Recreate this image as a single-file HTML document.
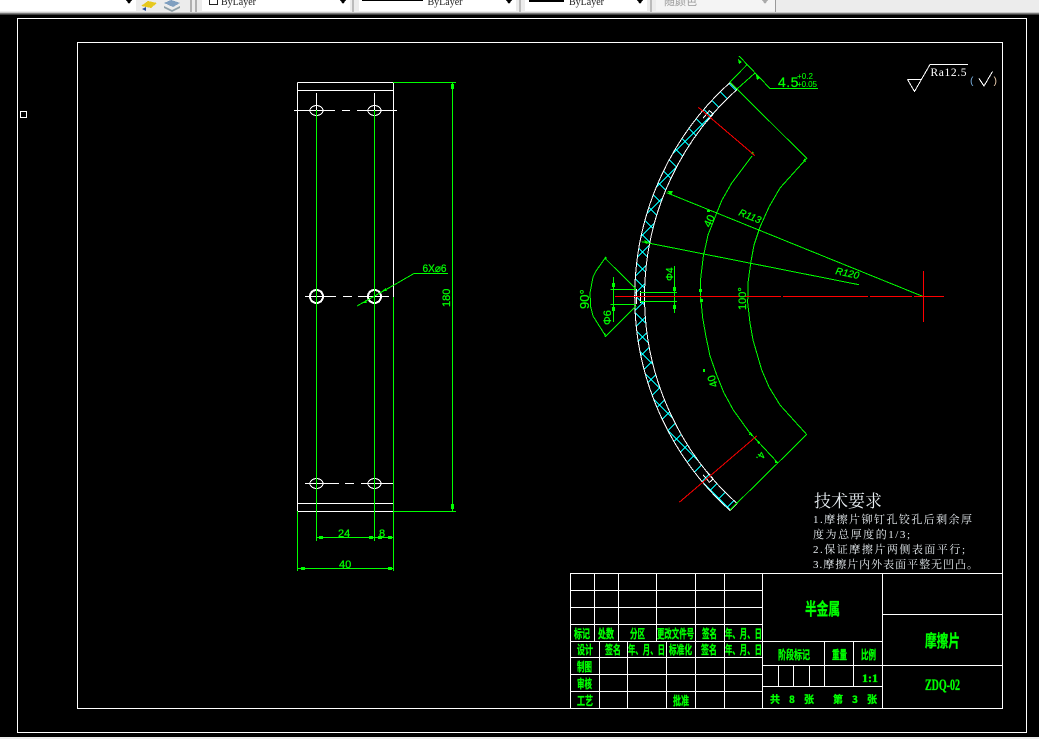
<!DOCTYPE html>
<html><head><meta charset="utf-8"><title>CAD</title>
<style>
html,body{margin:0;padding:0;background:#000;width:1039px;height:739px;overflow:hidden}
svg{display:block;position:absolute;left:0;top:0}
.g{fill:none;stroke:#0f0;stroke-width:1}
.w{fill:none;stroke:#fff;stroke-width:1}
.r{fill:none;stroke:#f00;stroke-width:1}
.t{font-family:"Liberation Sans",sans-serif;fill:#0f0;font-size:11px;stroke:#0f0;stroke-width:.25}
.c{font-family:"WenQuanYi Zen Hei","Noto Sans CJK SC",sans-serif;fill:#0f0;font-size:12px;font-weight:bold;stroke:#0f0;stroke-width:.35}
.k{font-family:"Liberation Serif","WenQuanYi Zen Hei","Noto Serif CJK SC",serif;fill:#e8eef2;font-size:11px}
.b{font-family:"Liberation Serif",serif;font-size:10px;fill:#222}
</style></head><body>
<svg width="1039" height="739" viewBox="0 0 1039 739" xmlns="http://www.w3.org/2000/svg" shape-rendering="crispEdges">
<rect width="1039" height="739" fill="#000"/>
<!-- toolbar -->
<rect x="0" y="0" width="1039" height="15" fill="#ececec"/>
<rect x="0" y="12" width="1039" height="1" fill="#c8c8c8"/>
<rect x="0" y="13" width="1039" height="1" fill="#7a7a7a"/>
<rect x="0" y="14" width="1039" height="1" fill="#404040"/>
<rect x="0" y="0" width="136" height="11" fill="#fff"/>
<path d="M126 0h6l-3 4z" fill="#000"/>
<path d="M141 6l7-5 9 2-6 5z" fill="#e6c81e"/><path d="M142 9l4-2v4z" fill="#2a4fa0"/>
<path d="M164 3l7-3 9 3-7 4z" fill="#7f9fc0"/><path d="M164 6l8 4 8-4v2l-8 4-8-4z" fill="#8fa0a8"/>
<rect x="190" y="0" width="2" height="12" fill="#b0b0b0"/><rect x="195" y="0" width="2" height="12" fill="#b0b0b0"/>
<rect x="202" y="0" width="148" height="11" fill="#fff"/>
<rect x="352" y="0" width="2" height="12" fill="#bbb"/>
<rect x="359" y="0" width="157" height="11" fill="#fff"/>
<rect x="519" y="0" width="2" height="12" fill="#bbb"/>
<rect x="525" y="0" width="122" height="11" fill="#fff"/>
<rect x="650" y="0" width="2" height="12" fill="#bbb"/>
<rect x="656" y="0" width="119" height="11" fill="#f4f4f4"/>
<rect x="775" y="0" width="1" height="12" fill="#999"/>
<rect x="209.500" y="-3.500" width="8" height="8" fill="#fff" stroke="#222"/>
<text x="221" y="5" class="b" shape-rendering="auto">ByLayer</text>
<rect x="362" y="0" width="61" height="1" fill="#000"/>
<text x="427.500" y="5" class="b">ByLayer</text>
<rect x="529" y="0" width="35" height="2" fill="#000"/>
<text x="569" y="5" class="b">ByLayer</text>
<text x="664" y="5" font-family="WenQuanYi Zen Hei,Noto Sans CJK SC,sans-serif" font-size="11" fill="#999">随颜色</text>
<path d="M340 0h6l-3 4zM506 0h6l-3 4zM637 0h6l-3 4z" fill="#000"/><path d="M762 0h6l-3 4z" fill="#aaa"/>
<!-- frames -->
<rect x="17.500" y="18.500" width="1009" height="714" class="w"/>
<rect x="77.500" y="42.500" width="925" height="666" class="w"/>
<rect x="20.500" y="111.500" width="6" height="6" class="w"/>
<!-- left view -->
<g class="w">
<path d="M297.500 82.500V511.500H393.500M297.500 82.500H393.500V297M297.500 90.500H393.500M297.500 503.500H393.500"/>
<path d="M294 110.500H335M342 110.500H350M357 110.500H397M316.500 93V110M374.500 93V110"/>
<path d="M305 296.500H336M343 296.500H352M358 296.500H389"/>
<path d="M305 483.500H339M345 483.500H354M361 483.500H393"/>
<ellipse cx="316.500" cy="110.500" rx="6.500" ry="5"/><ellipse cx="374.500" cy="110.500" rx="6.500" ry="5"/>
<ellipse cx="316.500" cy="483.500" rx="6.500" ry="5"/><ellipse cx="374.500" cy="483.500" rx="6.500" ry="5"/>
<circle cx="316.500" cy="296.500" r="7"/><circle cx="316.500" cy="296.500" r="6"/>
<circle cx="374.500" cy="296.500" r="7"/><circle cx="374.500" cy="296.500" r="6"/>
</g>
<g class="g">
<path d="M316.500 110V541M374.500 110V541M393.500 297V571M297.500 511V571M393 82.500H456M393 511.500H456M452.500 82V511"/>
<path d="M316 537.500H393M297 568.500H393"/>
<path d="M357 306L394 285L414 273.500H448"/>
</g>
<path d="M451 84h3v5h-3zM451 504h3v5h-3zM319 536h4v3h-4zM369 536h4v3h-4zM378 536h4v3h-4zM388 536h4v3h-4zM301 567h4v3h-4zM388 567h4v3h-4z" fill="#0f0"/>
<path d="M382 291l4-3 1 3zM362 303l4-3 1 3z" fill="#0f0"/>
<g shape-rendering="auto">
<text x="338" y="537" class="t">24</text><text x="379" y="537" class="t">8</text><text x="339" y="568" class="t">40</text>
<text x="422.500" y="272" class="t" textLength="24" lengthAdjust="spacingAndGlyphs">6X⌀6</text>
<text transform="translate(450,307) rotate(-90)" class="t">180</text>
</g>
<!-- arc part -->
<defs><clipPath id="band"><path d="M730 82.500A288 288 0 0 0 730 510.500L737 503.500A278 278 0 0 1 737 89.500Z"/></clipPath></defs>
<g clip-path="url(#band)">
<path fill="none" stroke="#0ff" d="M630 409.500l120 120M630 392.500l120 120M630 375.500l120 120M630 358.500l120 120M630 341.500l120 120M630 324.500l120 120M630 307.500l120 120M630 290.500l120 120M630 273.500l120 120M630 256.500l120 120M630 239.500l120 120M630 222.500l120 120M630 205.500l120 120M630 188.500l120 120M630 171.500l120 120M630 154.500l120 120M630 137.500l120 120M630 120.500l120 120M630 103.500l120 120M630 86.500l120 120M630 69.500l120 120M630 52.500l120 120M630 35.500l120 120M630 18.500l120 120M630 1.500l120 120M630 -15.500l120 120"/>
<path fill="none" stroke="#0ff" d="M630 179.500l120 -120M630 196.500l120 -120M630 213.500l120 -120M630 230.500l120 -120M630 247.500l120 -120M630 264.500l120 -120M630 281.500l120 -120M630 298.500l120 -120M630 315.500l120 -120M630 332.500l120 -120M630 349.500l120 -120M630 366.500l120 -120M630 383.500l120 -120M630 400.500l120 -120M630 417.500l120 -120M630 434.500l120 -120M630 451.500l120 -120M630 468.500l120 -120M630 485.500l120 -120M630 502.500l120 -120M630 519.500l120 -120M630 536.500l120 -120M630 553.500l120 -120M630 570.500l120 -120M630 587.500l120 -120M630 604.500l120 -120M630 621.500l120 -120"/>
</g>
<path class="w" d="M730 82.500A288 288 0 0 0 730 510.500L737 503.500A278 278 0 0 1 737 89.500Z"/>
<path class="w" d="M703 118.300L709.400 110.700L713.200 114L706.800 121.600M703 474.700L709.400 482.300L713.200 479L706.800 471.400M636.500 289V304M640.500 291V303M640.500 292.500H646.500M640.500 301.500H646.500"/>
<g class="g">
<path d="M730 82L806.700 158.300L780 188L769 207L760 227L754 245L750.700 263L748 283L747.700 303L750 323L753 340L761.700 370L769 387L780 405L806.700 434.500L730 510"/>
<path d="M752 156L731.700 183L722 200L716.700 213L708 235L703.300 256.700L700.500 280L700.500 296L702.700 318L706 336.700L710 356L716.700 375L724 393L733.300 410L752 436"/>
<path d="M666.700 192.700L923 296.500M641.700 241.700L859 284.700"/>
<path d="M730 82L746.700 65M737 89L755 73M739 56L770 88.500H818"/>
<path d="M750 433L778 463M605 258.300L636 289M605 337L636 306M605 258.300L596 271L593 277L590 293L590.700 307L593 316L605 335"/>
<path d="M610.500 289.500H636M610.500 304.500H636M613.500 277V322M674.500 266V313M640 292.500H677M640 301.500H677"/>
</g>
<path d="M612 283h3v4h-3zM612 307h3v4h-3zM673 287h3v4h-3zM673 305h3v4h-3zM699 289h3v3h-3zM700 299h3v3h-3zM667 191l6 0 -2 4zM644 240l5 2-3 2zM738 59l4 3-3 2zM756 75l4 3-3 2zM751 154l2-3 1 4zM803 161l2-3 1 4zM604 258l2-2 1 3zM603 332l3 2-1 3zM750 432l2 2-3 1zM757 440l3 2-2 2zM775 460l3 3-3 0z" fill="#0f0"/>
<g class="r">
<path d="M615 296.500H781M783 296.500H868M870 296.500H912M914 296.500H944M923.500 271V322"/>
<path d="M698.300 107.300L755 155.700M679.300 502.300L756.700 436"/>
</g>
<g shape-rendering="auto">
<text x="778" y="87" class="t" style="font-size:14px;letter-spacing:.5px">4.5</text>
<text x="797" y="79" class="t" style="font-size:8px;stroke-width:.1" textLength="16">+0.2</text>
<text x="797" y="87" class="t" style="font-size:8px;stroke-width:.1" textLength="20">+0.05</text>
<text transform="translate(738,215) rotate(22)" class="t" style="font-size:10px;font-style:italic">R113</text>
<text transform="translate(835,274) rotate(12)" class="t" style="font-size:10px;font-style:italic">R120</text>
<text transform="translate(710,228) rotate(-65)" class="t" style="font-size:11px">40</text>
<text transform="translate(718,386) rotate(-108)" class="t" style="font-size:11px">40</text>
<text transform="translate(746,310) rotate(-90)" class="t">100°</text>
<text transform="translate(589,309) rotate(-90)" class="t" style="font-size:13px">90°</text>
<text transform="translate(611,325) rotate(-90)" class="t">Φ6</text>
<text transform="translate(673,281) rotate(-90)" class="t" style="font-size:10px">Φ4</text>
<text transform="translate(760,451) rotate(120)" class="t" style="font-size:10px">4.</text>
</g>
<path d="M707 210h3v2h-3zM703 369h2v3h-2z" fill="#0f0"/>
<!-- roughness -->
<path class="w" d="M907.500 79.500H921.500M907.500 79.500L914.500 91.500L930 64.500H968M979 78.500L984 86L992.500 71.500"/>
<g shape-rendering="auto">
<text x="930.500" y="76" font-family="Liberation Serif,serif" font-size="11.500" fill="#fff" textLength="36">Ra12.5</text>
<text x="969" y="84" font-family="Liberation Mono,monospace" font-size="10" fill="#7ab0e0">(</text>
<text x="992" y="84" font-family="Liberation Mono,monospace" font-size="10" fill="#f0d0b0">)</text>
</g>
<!-- tech req -->
<g shape-rendering="auto">
<text x="814" y="507" class="k" style="font-size:17px" textLength="68">技术要求</text>
<text x="813" y="523" class="k" textLength="159">1.摩擦片铆钉孔铰孔后剩余厚</text>
<text x="813" y="538" class="k" textLength="97">度为总厚度的1/3;</text>
<text x="813" y="553" class="k" textLength="152">2.保证摩擦片两侧表面平行;</text>
<text x="813" y="568" class="k" textLength="165">3.摩擦片内外表面平整无凹凸。</text>
</g>
<!-- title block -->
<g class="w">
<rect x="570.500" y="573.500" width="432" height="135"/>
<path d="M570 590.500H762M570 607.500H762M570 624.500H762M570 641.500H882M570 657.500H762M570 674.500H762M570 691.500H762"/>
<path d="M594.500 573V641M618.500 573V641M656.500 573V641M695.500 573V708M724.500 573V708M762.500 573V708M882.500 573V708"/>
<path d="M599.500 641V708M627.500 641V708M666.500 641V708"/>
<path d="M882 614.500H1002M762 665.500H1002M762 686.500H882M824.500 641V686M853.500 641V686M778.500 665V686M793.500 665V686M809.500 665V686"/>
</g>
<g shape-rendering="auto">
<g class="c">
<text x="574" y="638" textLength="16" lengthAdjust="spacingAndGlyphs">标记</text>
<text x="598" y="638" textLength="16" lengthAdjust="spacingAndGlyphs">处数</text>
<text x="630" y="638" textLength="15" lengthAdjust="spacingAndGlyphs">分区</text>
<text x="657" y="638" textLength="37" lengthAdjust="spacingAndGlyphs">更改文件号</text>
<text x="702" y="638" textLength="15" lengthAdjust="spacingAndGlyphs">签名</text>
<text x="725" y="638" textLength="37" lengthAdjust="spacingAndGlyphs">年、月、日</text>
<text x="577" y="654" textLength="16" lengthAdjust="spacingAndGlyphs">设计</text>
<text x="605" y="654" textLength="16" lengthAdjust="spacingAndGlyphs">签名</text>
<text x="628" y="654" textLength="37" lengthAdjust="spacingAndGlyphs">年、月、日</text>
<text x="669" y="654" textLength="23" lengthAdjust="spacingAndGlyphs">标准化</text>
<text x="701" y="654" textLength="16" lengthAdjust="spacingAndGlyphs">签名</text>
<text x="725" y="654" textLength="37" lengthAdjust="spacingAndGlyphs">年、月、日</text>
<text x="577" y="671" textLength="15" lengthAdjust="spacingAndGlyphs">制图</text>
<text x="577" y="688" textLength="15" lengthAdjust="spacingAndGlyphs">审核</text>
<text x="577" y="705" textLength="16" lengthAdjust="spacingAndGlyphs">工艺</text>
<text x="673" y="705" textLength="16" lengthAdjust="spacingAndGlyphs">批准</text>
<text x="805" y="615" style="font-size:17px" textLength="35" lengthAdjust="spacingAndGlyphs">半金属</text>
<text x="778" y="659" textLength="32" lengthAdjust="spacingAndGlyphs">阶段标记</text>
<text x="832" y="659" textLength="15" lengthAdjust="spacingAndGlyphs">重量</text>
<text x="861" y="659" textLength="15" lengthAdjust="spacingAndGlyphs">比例</text>
<text x="862" y="682" style="font-family:'Liberation Serif',serif">1:1</text>
<text x="770" y="703" style="font-size:10px">共</text>
<text x="789" y="703" style="font-size:10px">8</text>
<text x="804" y="703" style="font-size:10px">张</text>
<text x="833" y="703" style="font-size:10px">第</text>
<text x="852" y="703" style="font-size:10px">3</text>
<text x="867" y="703" style="font-size:10px">张</text>
<text x="925" y="647" style="font-size:17px" textLength="35" lengthAdjust="spacingAndGlyphs">摩擦片</text>
<text x="925" y="690" style="font-family:'Liberation Serif',serif;font-size:16px" textLength="35" lengthAdjust="spacingAndGlyphs">ZDQ-02</text>
</g>
</g>
<rect x="0" y="737" width="1039" height="2" fill="#ececec"/>
</svg>
</body></html>
